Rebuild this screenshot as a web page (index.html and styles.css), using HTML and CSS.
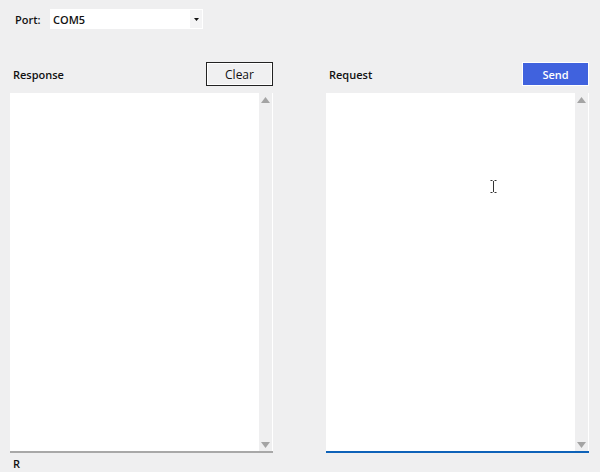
FILE: index.html
```html
<!DOCTYPE html>
<html>
<head>
<meta charset="utf-8">
<link rel="stylesheet" href="styles.css">
</head>
<body>
<div class="app">
  <div class="port-row">
    <span class="port-label">Port:</span>
    <div class="combo">
      <span class="combo-value">COM5</span>
      <span class="combo-btn"><svg width="5" height="3" viewBox="0 0 5 3"><path d="M0 0H5L2.5 3Z" fill="#111"/></svg></span>
    </div>
  </div>
  <div class="panes">
    <div class="pane">
      <div class="pane-head">
        <span class="pane-title">Response</span>
        <button class="btn btn-outline">Clear</button>
      </div>
      <div class="textbox">
        <div class="text-area"></div>
        <div class="scrollbar">
          <svg width="9" height="6" viewBox="0 0 9 6"><path d="M0 6H9L4.5 0Z" fill="#a4a4a4"/></svg>
          <svg width="9" height="6" viewBox="0 0 9 6"><path d="M0 0H9L4.5 6Z" fill="#a4a4a4"/></svg>
        </div>
      </div>
      <div class="status">R</div>
    </div>
    <div class="pane">
      <div class="pane-head">
        <span class="pane-title">Request</span>
        <button class="btn btn-primary">Send</button>
      </div>
      <div class="textbox focused">
        <div class="text-area">
          <svg class="ibeam" width="7" height="13" viewBox="0 0 7 13"><path d="M0.5 0.5H2.5M4.5 0.5H6.5M3.5 1V12M0.5 12.5H2.5M4.5 12.5H6.5" stroke="#333" stroke-width="1" fill="none"/></svg>
        </div>
        <div class="scrollbar">
          <svg width="9" height="6" viewBox="0 0 9 6"><path d="M0 6H9L4.5 0Z" fill="#a4a4a4"/></svg>
          <svg width="9" height="6" viewBox="0 0 9 6"><path d="M0 0H9L4.5 6Z" fill="#a4a4a4"/></svg>
        </div>
      </div>
    </div>
  </div>
</div>
</body>
</html>
```
FILE: styles.css
```css
html, body {
  margin: 0;
  padding: 0;
  background: #efeff0;
  font-family: "Open Sans", "Noto Sans", sans-serif;
  font-size: 11px;
  color: #111;
}
.app {
  width: 600px;
  height: 472px;
  box-sizing: border-box;
  padding: 9px 10px 0 10px;
}
.port-row {
  display: flex;
  align-items: center;
  height: 20px;
}
.port-label {
  margin-left: 5px;
  width: 35px;
  font-weight: 600;
}
.combo {
  width: 153px;
  height: 20px;
  background: #fff;
  display: flex;
  align-items: center;
  box-sizing: border-box;
}
.combo-value {
  flex: 1;
  padding-left: 3px;
  font-weight: 600;
}
.combo-btn {
  width: 12px;
  height: 18px;
  margin-right: 1px;
  background: #f4f4f5;
  display: flex;
  align-items: center;
  justify-content: center;
}
.panes {
  display: grid;
  grid-template-columns: 263px 263px;
  column-gap: 53px;
  margin-top: 33px;
}
.pane {
  display: flex;
  flex-direction: column;
}
.pane-head {
  display: flex;
  justify-content: space-between;
  align-items: center;
  height: 24px;
  margin-bottom: 7px;
}
.pane-title {
  font-weight: 600;
  margin-left: 3px;
}
.btn {
  width: 67px;
  height: 24px;
  font-family: inherit;
  font-size: 12px;
  padding: 0;
  cursor: pointer;
}
.btn-outline {
  background: #f0f0f1;
  border: 1px solid #222;
  box-shadow: inset 0 0 0 1px #fff;
  color: #111;
}
.btn-primary {
  background: #4062de;
  border: 1px solid #fff;
  color: #fff;
  font-weight: 600;
  font-size: 11px;
}
.textbox {
  height: 360px;
  display: flex;
  background: #fff;
  border-bottom: 2px solid #a8a8a8;
  box-sizing: border-box;
}
.textbox.focused {
  border-bottom-color: #0e62b8;
}
.text-area {
  flex: 1;
  position: relative;
}
.ibeam {
  position: absolute;
  left: 164px;
  top: 87px;
}
.scrollbar {
  width: 13px;
  margin-right: 1px;
  background: #efeff0;
  display: flex;
  flex-direction: column;
  justify-content: space-between;
  align-items: center;
  padding: 4px 0 3px;
}
.status {
  margin-top: 3px;
  margin-left: 3px;
  font-weight: 600;
}
```
